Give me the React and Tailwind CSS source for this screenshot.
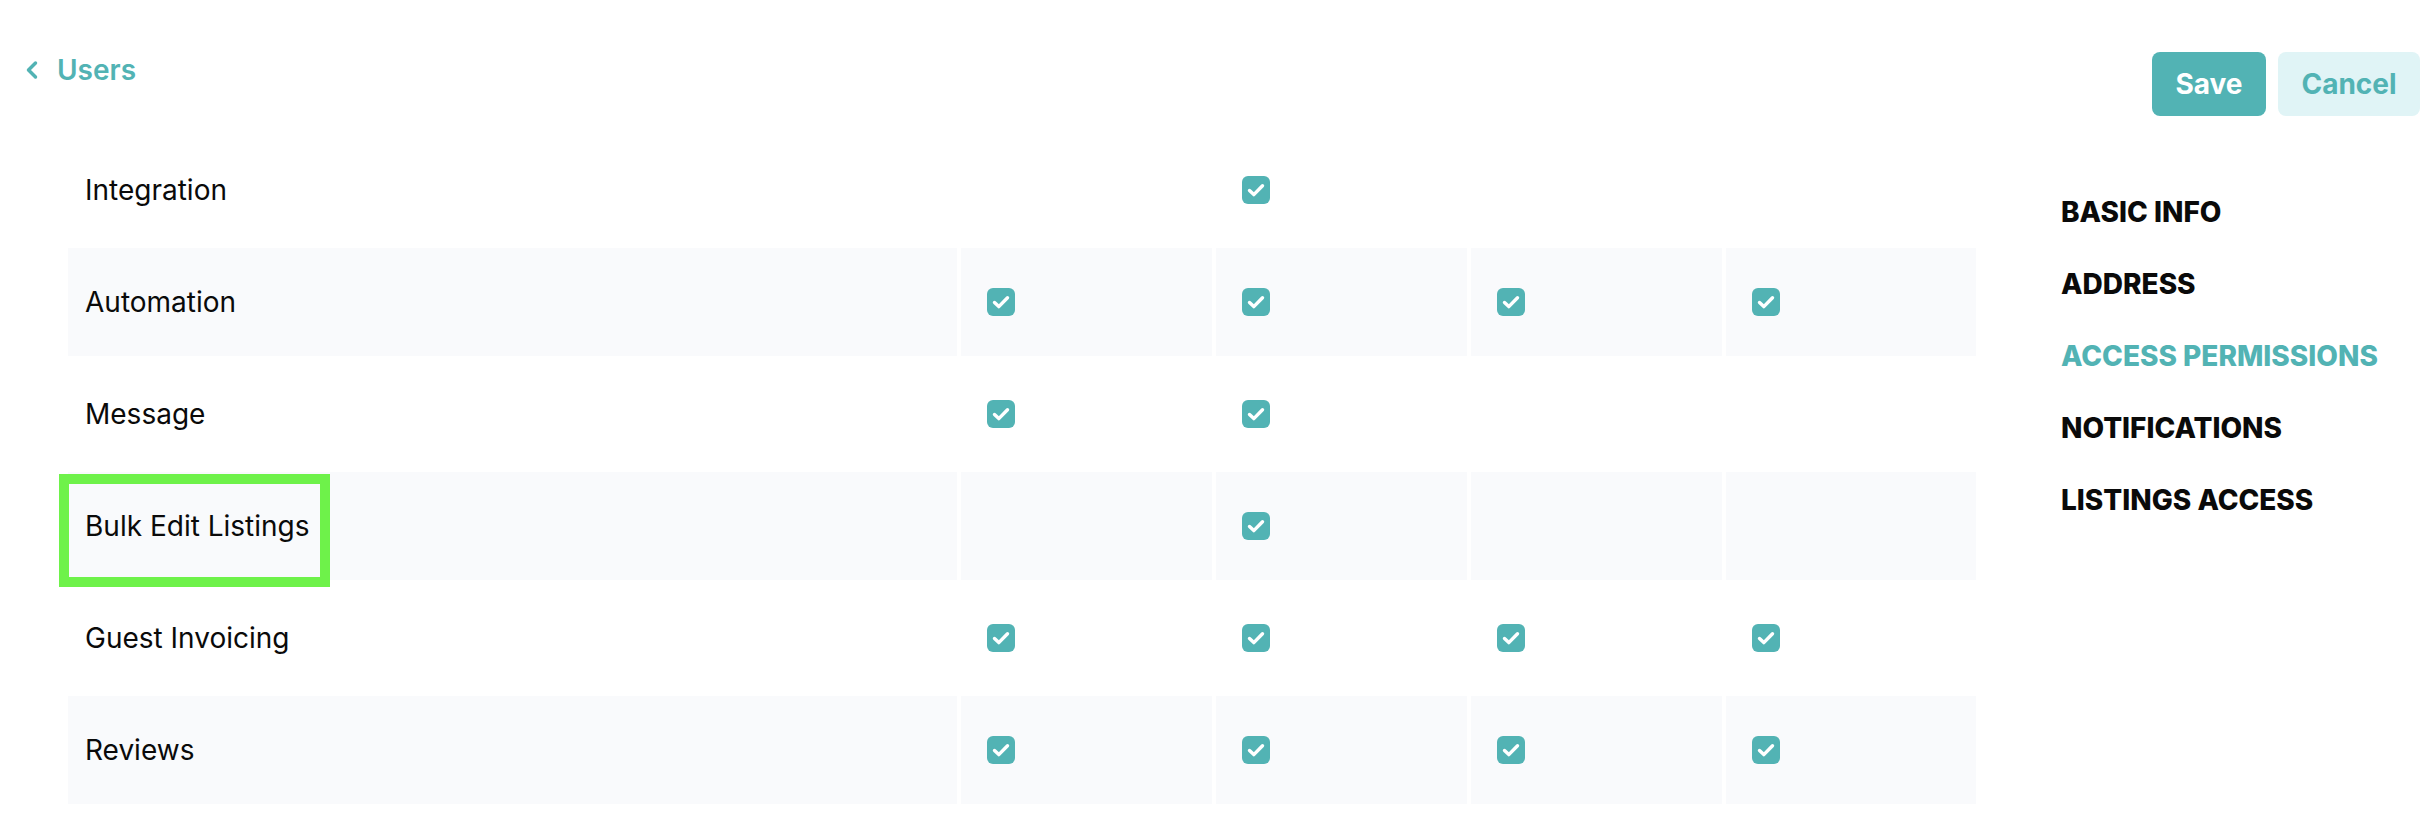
import React from 'react';
import { ChevronLeft } from 'lucide-react';

const permissions = [
  { name: 'Integration', checks: [false, true, false, false] },
  { name: 'Automation', checks: [true, true, true, true] },
  { name: 'Message', checks: [true, true, false, false] },
  { name: 'Bulk Edit Listings', checks: [false, true, false, false], marked: true },
  { name: 'Guest Invoicing', checks: [true, true, true, true] },
  { name: 'Reviews', checks: [true, true, true, true] },
];

const sections = ['BASIC INFO', 'ADDRESS', 'ACCESS PERMISSIONS', 'NOTIFICATIONS', 'LISTINGS ACCESS'];

function CheckBox() {
  return (
    <svg width="28" height="28" viewBox="0 0 28 28" className="block">
      <rect x="0" y="0" width="28" height="28" rx="6" fill="#52b3b4" />
      <path d="M7.5 14.5 L11.8 18.6 L20.5 9.8" fill="none" stroke="#fff" strokeWidth="3.4" strokeLinecap="round" strokeLinejoin="round" />
    </svg>
  );
}

export default function App() {
  return (
    <div className="flex w-full min-h-[826px] bg-white text-[#0a0a0a]" style={{ fontFamily: 'Inter, "Liberation Sans", sans-serif' }}>
      {/* left side: back link + permissions table */}
      <div className="w-[2061px] shrink-0 pt-[56px]">
        <div className="flex items-center pl-[18px] text-[#52b3b4]">
          <ChevronLeft size={28} strokeWidth={3} />
          <span className="ml-[11px] text-[28px] leading-[28px] font-semibold">Users</span>
        </div>

        <table className="mt-[48px] ml-[64px] border-separate border-spacing-1 table-fixed">
          <colgroup>
            <col className="w-[889px]" />
            <col className="w-[251px]" />
            <col className="w-[251px]" />
            <col className="w-[251px]" />
            <col className="w-[250px]" />
          </colgroup>
          <tbody>
            {permissions.map((row, i) => (
              <tr key={row.name} className={i % 2 === 1 ? 'bg-[#f9fafc]' : 'bg-white'}>
                <td className="relative h-[108px] pl-[17px] text-[28px] leading-[28px] align-middle">
                  {row.name}
                  {row.marked && (
                    <div className="absolute left-[-9px] top-[2px] w-[271px] h-[113px] border-[10px] border-[#6ef24a] pointer-events-none"></div>
                  )}
                </td>
                {row.checks.map((on, j) => (
                  <td key={j} className="h-[108px] pl-[26px] align-middle">
                    {on && <CheckBox />}
                  </td>
                ))}
              </tr>
            ))}
          </tbody>
        </table>
      </div>

      {/* right side: actions + section nav */}
      <div className="flex-1 pt-[52px] pr-[14px]">
        <div className="flex justify-end gap-3">
          <button className="w-[114px] h-[64px] rounded-[8px] bg-[#52b3b4] text-white text-[28px] font-bold">Save</button>
          <button className="w-[142px] h-[64px] rounded-[8px] bg-[#e0f4f6] text-[#52b3b4] text-[28px] font-bold">Cancel</button>
        </div>
        <nav className="mt-[82px] flex flex-col gap-[44px]">
          {sections.map((s) => (
            <div
              key={s}
              className={`text-[28px] leading-[28px] font-extrabold ${s === 'ACCESS PERMISSIONS' ? 'text-[#52b3b4]' : 'text-[#0a0a0a]'}`}
            >
              {s}
            </div>
          ))}
        </nav>
      </div>
    </div>
  );
}
